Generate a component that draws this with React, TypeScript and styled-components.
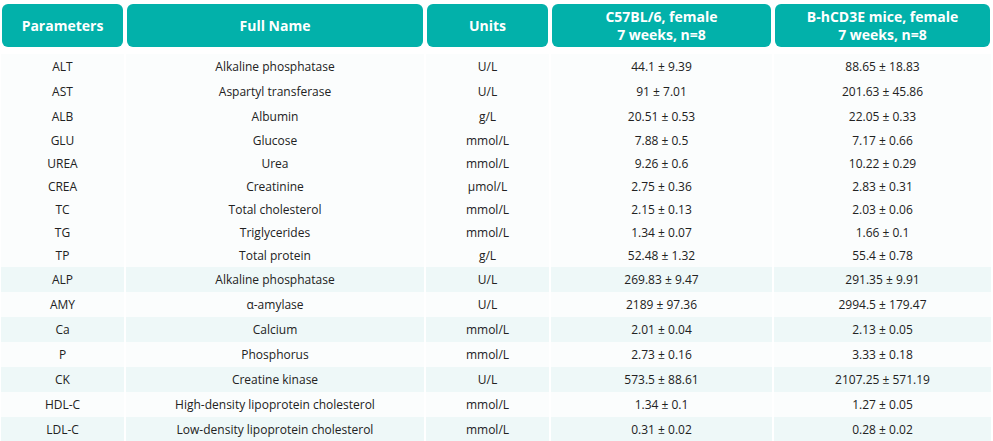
import React from 'react';
import styled, { createGlobalStyle } from 'styled-components';

const GlobalStyle = createGlobalStyle`
    html, body {
        margin: 0;
        padding: 0;
        background: #ffffff;
    }
    body {
        font-family: "Open Sans", "Noto Sans", sans-serif;
        color: #222222;
    }
`;

const Wrapper = styled.div`
    width: 993px;
    padding: 4px 0 0 2px;
    box-sizing: border-box;
`;

const HeaderRow = styled.div`
    display: grid;
    grid-template-columns: 121px 296px 121px 219px 215px;
    column-gap: 4px;
    margin-bottom: 7px;
`;

const HeaderCell = styled.div`
    height: 43px;
    background: #02b1aa;
    border-radius: 6px;
    color: #ffffff;
    font-weight: 700;
    font-size: 14px;
    line-height: 18px;
    display: flex;
    align-items: center;
    justify-content: center;
    text-align: center;
`;

const BodyRow = styled.div<{ $h: number }>`
    display: grid;
    grid-template-columns: 123px 298px 123px 221px 217px;
    column-gap: 2px;
    margin-left: -1px;
    height: ${({ $h }) => $h}px;
`;

const BodyCell = styled.div<{ $tint: boolean }>`
    background: ${({ $tint }) => ($tint ? '#eef8f8' : '#fbfdfd')};
    font-size: 12px;
    display: flex;
    align-items: center;
    justify-content: center;
    white-space: nowrap;
`;

type Row = [string, string, string, string, string];

const rows: Row[] = [
    ['ALT', 'Alkaline phosphatase', 'U/L', '44.1 ± 9.39', '88.65 ± 18.83'],
    ['AST', 'Aspartyl transferase', 'U/L', '91 ± 7.01', '201.63 ± 45.86'],
    ['ALB', 'Albumin', 'g/L', '20.51 ± 0.53', '22.05 ± 0.33'],
    ['GLU', 'Glucose', 'mmol/L', '7.88 ± 0.5', '7.17 ± 0.66'],
    ['UREA', 'Urea', 'mmol/L', '9.26 ± 0.6', '10.22 ± 0.29'],
    ['CREA', 'Creatinine', 'µmol/L', '2.75 ± 0.36', '2.83 ± 0.31'],
    ['TC', 'Total cholesterol', 'mmol/L', '2.15 ± 0.13', '2.03 ± 0.06'],
    ['TG', 'Triglycerides', 'mmol/L', '1.34 ± 0.07', '1.66 ± 0.1'],
    ['TP', 'Total protein', 'g/L', '52.48 ± 1.32', '55.4 ± 0.78'],
    ['ALP', 'Alkaline phosphatase', 'U/L', '269.83 ± 9.47', '291.35 ± 9.91'],
    ['AMY', 'α-amylase', 'U/L', '2189 ± 97.36', '2994.5 ± 179.47'],
    ['Ca', 'Calcium', 'mmol/L', '2.01 ± 0.04', '2.13 ± 0.05'],
    ['P', 'Phosphorus', 'mmol/L', '2.73 ± 0.16', '3.33 ± 0.18'],
    ['CK', 'Creatine kinase', 'U/L', '573.5 ± 88.61', '2107.25 ± 571.19'],
    ['HDL-C', 'High-density lipoprotein cholesterol', 'mmol/L', '1.34 ± 0.1', '1.27 ± 0.05'],
    ['LDL-C', 'Low-density lipoprotein cholesterol', 'mmol/L', '0.31 ± 0.02', '0.28 ± 0.02'],
];

// first block is plain, second block alternates tinted rows
const rowHeight = (i: number) => (i < 3 ? 25 : i < 9 ? 23 : 25);
const isTinted = (i: number) => i >= 9 && (i - 9) % 2 === 0;

const App: React.FC = () => {
    return (
        <>
            <GlobalStyle />
            <Wrapper>
                <HeaderRow>
                    <HeaderCell>Parameters</HeaderCell>
                    <HeaderCell>Full Name</HeaderCell>
                    <HeaderCell>Units</HeaderCell>
                    <HeaderCell>
                        C57BL/6, female
                        <br />
                        7 weeks, n=8
                    </HeaderCell>
                    <HeaderCell>
                        B-hCD3E mice, female
                        <br />
                        7 weeks, n=8
                    </HeaderCell>
                </HeaderRow>
                {rows.map((row, i) => (
                    <BodyRow key={row[0]} $h={rowHeight(i)}>
                        {row.map((text, j) => (
                            <BodyCell key={j} $tint={isTinted(i)}>
                                {text}
                            </BodyCell>
                        ))}
                    </BodyRow>
                ))}
            </Wrapper>
        </>
    );
};

export default App;
